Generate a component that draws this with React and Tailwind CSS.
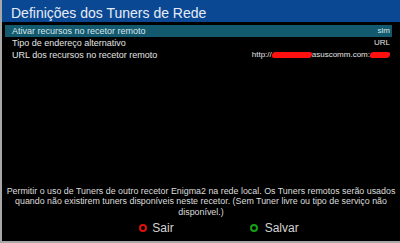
import React from "react";

const rows = [
  { label: "Ativar recursos no recetor remoto", value: "sim", selected: true },
  { label: "Tipo de endereço alternativo", value: "URL" },
  { label: "URL dos recursos no recetor remoto", value: "url" },
];

const Redacted = ({ w }) => (
  <span className={`inline-block h-[6px] bg-[#ff1010] rounded-full -skew-x-12 ${w}`} />
);

const UrlValue = () => (
  <span className="flex items-center">
    <span>http://</span>
    <Redacted w="w-[40px]" />
    <span>asuscomm.com:</span>
    <Redacted w="w-[20px]" />
  </span>
);

export default function App() {
  return (
    <div className="w-[400px] h-[243px] bg-black border-l-2 border-b-2 border-[#a8a8a8] flex flex-col overflow-hidden font-['Liberation_Sans',Arial,sans-serif]">
      {/* Title */}
      <div className="h-[22px] bg-[#0b4894] text-[#e6ecf4] text-[14px] leading-[22px] pl-[9px] pt-[2px] shrink-0">
        Definições dos Tuners de Rede
      </div>

      {/* Settings list */}
      <div className="mt-[3px] ml-[3px] mr-[8px] flex flex-col">
        {rows.map((row) => (
          <div
            key={row.label}
            className={`h-[12px] flex items-center justify-between pl-[7px] pr-[2px] text-[9px] leading-none ${
              row.selected ? "bg-[#135a6f] text-[#d8e6ea]" : "text-[#e4e4e4]"
            }`}
          >
            <span>{row.label}</span>
            {row.value === "url" ? (
              <span className="text-[8px]"><UrlValue /></span>
            ) : (
              <span className="text-[8px]">{row.value}</span>
            )}
          </div>
        ))}
      </div>

      <div className="flex-1" />

      {/* Help text */}
      <div className="px-[4px] text-center text-[#dcdcdc] text-[8.9px] leading-[10.5px]">
        Permitir o uso de Tuners de outro recetor Enigma2 na rede local. Os Tuners remotos serão usados quando não existirem tuners disponíveis neste recetor. (Sem Tuner livre ou tipo de serviço não disponível.)
      </div>

      {/* Buttons */}
      <div className="h-[24px] flex items-center justify-center gap-[76px] pl-[36px] text-[#d4d4d4] text-[12px] pb-[2px]">
        <div className="flex items-center gap-[5px]">
          <span className="w-[8px] h-[8px] rounded-full border-[2px] border-[#e01010]" />
          <span>Sair</span>
        </div>
        <div className="flex items-center gap-[7px]">
          <span className="w-[8px] h-[8px] rounded-full border-[2px] border-[#14a014]" />
          <span>Salvar</span>
        </div>
      </div>
    </div>
  );
}
